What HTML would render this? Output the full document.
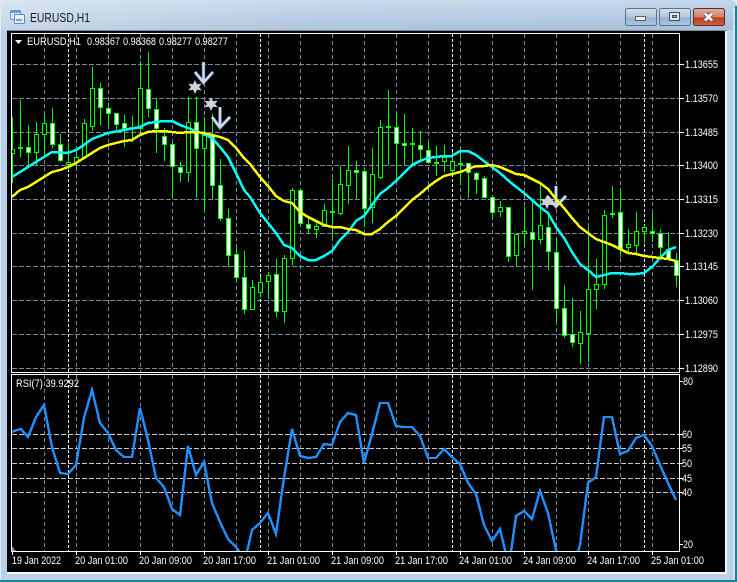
<!DOCTYPE html>
<html><head><meta charset="utf-8"><title>EURUSD,H1</title>
<style>html,body{margin:0;padding:0;width:737px;height:582px;overflow:hidden;background:#b9d1ea}svg{display:block}text{font-family:"Liberation Sans",sans-serif;fill:#fff;font-size:11px}</style></head>
<body>
<svg width="737" height="582" viewBox="0 0 737 582" xmlns="http://www.w3.org/2000/svg">
<defs>
<linearGradient id="t" x1="0" y1="0" x2="0" y2="1"><stop offset="0" stop-color="#c4d8ec"/><stop offset=".06" stop-color="#c2d6ea"/><stop offset="1" stop-color="#a6bfd9"/></linearGradient>
<linearGradient id="h" x1="0" y1="0" x2="1" y2="0"><stop offset="0" stop-color="#fff" stop-opacity=".35"/><stop offset=".4" stop-color="#fff" stop-opacity=".1"/><stop offset="1" stop-color="#fff" stop-opacity="0"/></linearGradient>
<linearGradient id="b" x1="0" y1="0" x2="0" y2="1"><stop offset="0" stop-color="#d3deeb"/><stop offset=".5" stop-color="#b3c8de"/><stop offset=".55" stop-color="#97b4d2"/><stop offset="1" stop-color="#a7c4e0"/></linearGradient>
<linearGradient id="c" x1="0" y1="0" x2="0" y2="1"><stop offset="0" stop-color="#e3b0a6"/><stop offset=".5" stop-color="#d3806e"/><stop offset=".55" stop-color="#bd3d22"/><stop offset="1" stop-color="#cf5f40"/></linearGradient>
<clipPath id="m"><rect x="12" y="34" width="667" height="338"/></clipPath>
<clipPath id="r"><rect x="12" y="375" width="667" height="176"/></clipPath>
</defs>
<rect width="737" height="582" fill="#b9d1ea"/>
<rect width="737" height="30" fill="url(#t)"/>
<rect width="737" height="30" fill="url(#h)"/>
<path d="M0 0H6Q0 1 0 8Z" fill="#e8e8e8"/>
<path d="M731 0H737V8Q737 1 731 0Z" fill="#e8e8e8"/>
<rect x="0" y="8" width="1" height="574" fill="#e4edf6"/>
<rect x="733" y="8" width="2" height="572" fill="#d2e2f1"/>
<rect x="735" y="6" width="2" height="576" fill="#1f8295"/>
<rect x="0" y="580" width="737" height="2" fill="#1f8295"/>
<rect x="7" y="30" width="720" height="1.5" fill="#7f8c9c"/>
<rect x="7" y="31" width="719" height="541" fill="#000"/>
<rect x="7" y="572" width="720" height="2" fill="#f4f8fc"/>
<rect x="725" y="31" width="2" height="543" fill="#f4f8fc"/>

<!-- title icon -->
<rect x="10.500" y="10.500" width="10" height="9" rx="1" fill="#dfeaf6" stroke="#6e93c8"/>
<rect x="14.500" y="14.500" width="10" height="9" rx="1" fill="#eef4fb" stroke="#5b86c4"/>
<path d="M16 19l1.500 2 1.500-2 1.500 2 1.500-2" fill="none" stroke="#4a78bd"/>
<rect x="11" y="11" width="9" height="2" fill="#6f9bd6"/>
<text x="30" y="22" style="font-size:12.500px;fill:#141c28" textLength="60" lengthAdjust="spacingAndGlyphs">EURUSD,H1</text>

<!-- window buttons -->
<rect x="625.500" y="8.500" width="31" height="17" rx="2" fill="url(#b)" stroke="#5e718a"/>
<rect x="635.500" y="16.500" width="10" height="4" fill="#eceff3" stroke="#56606e"/>
<rect x="659.500" y="8.500" width="31" height="17" rx="2" fill="url(#b)" stroke="#5e718a"/>
<rect x="669.500" y="12.500" width="10" height="8" fill="#dfe5ec" stroke="#444e5c"/>
<rect x="672.500" y="15.500" width="4" height="2" fill="#8ea6c0" stroke="#444e5c"/>
<rect x="693.500" y="8.500" width="31" height="17" rx="2" fill="url(#c)" stroke="#5c2a2c"/>
<path d="M705 13.500L712 20.500M712 13.500L705 20.500" stroke="#5d3a3a" stroke-width="4.500" fill="none"/>
<path d="M705 13.500L712 20.500M712 13.500L705 20.500" stroke="#f5f5f5" stroke-width="3" fill="none"/>

<!-- main grid -->
<g clip-path="url(#m)" shape-rendering="crispEdges">
<path d="M12 64.500H680M12 98.500H680M12 132.500H680M12 165.500H680M12 199.500H680M12 233.500H680M12 266.500H680M12 300.500H680M12 334.500H680M12 368.500H680" stroke="#778899" stroke-dasharray="5 2" fill="none"/>
<path d="M44.500 34V372M76.500 34V372M108.500 34V372M140.500 34V372M172.500 34V372M204.500 34V372M236.500 34V372M268.500 34V372M300.500 34V372M332.500 34V372M364.500 34V372M396.500 34V372M428.500 34V372M460.500 34V372M492.500 34V372M524.500 34V372M556.500 34V372M588.500 34V372M620.500 34V372M652.500 34V372" stroke="#778899" stroke-dasharray="4 3" fill="none"/>
<path d="M68.500 34V372M260.500 34V372M452.500 34V372M644.500 34V372" stroke="#fff" stroke-dasharray="3 2" fill="none"/>
<!-- wicks -->
<path stroke="#00ff00" fill="none" d="M12.500 117V183M20.500 100V157M28.500 125V167M36.500 122V165M44.500 114V157M52.500 108V148M60.500 134V162M68.500 143V170M76.500 150V168M84.500 119V157M92.500 67V131M100.500 83V125M108.500 103V126M116.500 113V132M124.500 115V147M132.500 116V142M140.500 61V133M148.500 52V117M156.500 99V153M164.500 128V161M172.500 142V197M180.500 162V182M188.500 97V182M196.500 97V198M204.500 117V212M212.500 114V199M220.500 159V221M228.500 209V267M236.500 247V282M244.500 251V314M252.500 280V309M260.500 277V297M268.500 272V299M276.500 259V317M284.500 255V323M292.500 188V265M300.500 188V227M308.500 218V233M316.500 222V238M324.500 204V227M332.500 179V238M340.500 166V215M348.500 146V204M356.500 161V199M364.500 168V227M372.500 148V223M380.500 120V179M388.500 90V165M396.500 113V180M404.500 114V166M412.500 128V167M420.500 131V162M428.500 141V163M436.500 146V176M444.500 145V172M452.500 152V175M460.500 147V185M468.500 163V198M476.500 172V194M484.500 176V198M492.500 197V217M500.500 201V217M508.500 207V262M516.500 233V267M524.500 207V247M532.500 201V290M540.500 183V244M548.500 213V270M556.500 238V323M564.500 285V338M572.500 298V347M580.500 311V364M588.500 227V362M596.500 259V309M604.500 210V289M612.500 186V218M620.500 189V257M628.500 229V253M636.500 212V255M644.500 225V243M652.500 213V242M660.500 229V257M668.500 232V259M676.500 253V287"/>
<!-- dojis -->
<path stroke="#00ff00" stroke-width="2" fill="none" d="M18 148h5M130 128h5M330 212h5M386 127h5M410 144h5M434 163h5M458 164h5M610 214h5"/>
<!-- bull (hollow) bodies -->
<path stroke="#00ff00" fill="#000" d="M10.500 149.500h4v4h-4zM34.500 134.500h4v18h-4zM42.500 123.500h4v11h-4zM66.500 162.500h4v2h-4zM74.500 157.500h4v5h-4zM82.500 123.500h4v34h-4zM90.500 88.500h4v38h-4zM138.500 88.500h4v40h-4zM186.500 122.500h4v50h-4zM202.500 135.500h4v13h-4zM250.500 287.500h4v22h-4zM258.500 282.500h4v10h-4zM266.500 275.500h4v6h-4zM282.500 258.500h4v53h-4zM290.500 190.500h4v68h-4zM314.500 226.500h4v3h-4zM322.500 210.500h4v16h-4zM338.500 184.500h4v29h-4zM346.500 170.500h4v15h-4zM370.500 174.500h4v33h-4zM378.500 127.500h4v50h-4zM442.500 157.500h4v4h-4zM450.500 161.500h4v9h-4zM498.500 207.500h4v4h-4zM514.500 234.500h4v21h-4zM522.500 231.500h4v2h-4zM538.500 225.500h4v14h-4zM578.500 332.500h4v11h-4zM586.500 289.500h4v44h-4zM594.500 284.500h4v5h-4zM602.500 215.500h4v69h-4zM626.500 244.500h4v3h-4zM634.500 231.500h4v14h-4zM642.500 227.500h4v4h-4z"/>
<!-- bear (white) bodies -->
<path stroke="#00ff00" fill="#fff" d="M26.500 147.500h4v5h-4zM50.500 123.500h4v21h-4zM58.500 144.500h4v16h-4zM98.500 88.500h4v19h-4zM106.500 108.500h4v5h-4zM114.500 113.500h4v11h-4zM122.500 123.500h4v5h-4zM146.500 89.500h4v19h-4zM154.500 109.500h4v19h-4zM162.500 136.500h4v8h-4zM170.500 144.500h4v22h-4zM178.500 167.500h4v5h-4zM194.500 122.500h4v26h-4zM210.500 134.500h4v51h-4zM218.500 185.500h4v33h-4zM226.500 218.500h4v37h-4zM234.500 254.500h4v23h-4zM242.500 277.500h4v32h-4zM274.500 274.500h4v37h-4zM298.500 190.500h4v33h-4zM306.500 224.500h4v4h-4zM354.500 170.500h4v2h-4zM362.500 171.500h4v37h-4zM394.500 127.500h4v16h-4zM402.500 143.500h4v2h-4zM418.500 145.500h4v4h-4zM426.500 150.500h4v12h-4zM466.500 163.500h4v9h-4zM474.500 173.500h4v6h-4zM482.500 178.500h4v19h-4zM490.500 197.500h4v15h-4zM506.500 207.500h4v49h-4zM530.500 232.500h4v7h-4zM546.500 227.500h4v24h-4zM554.500 252.500h4v56h-4zM562.500 308.500h4v27h-4zM570.500 334.500h4v8h-4zM618.500 212.500h4v36h-4zM650.500 231.500h4v2h-4zM658.500 233.500h4v14h-4zM666.500 249.500h4v10h-4zM674.500 260.500h4v15h-4z"/>
</g>

<!-- arrows and stars -->
<g fill="none" stroke-linejoin="miter">
<path d="M203.500 62V82M195 72L203.500 82.500L213 72" stroke="#3a6fb5" stroke-width="3.500"/>
<path d="M203.500 62V82M195 72L203.500 82.500L213 72" stroke="#d6d8de" stroke-width="2.400"/>
<path d="M220 107V127M212 117L220 127.500L230 117" stroke="#3a6fb5" stroke-width="3.500"/>
<path d="M220 107V127M212 117L220 127.500L230 117" stroke="#d6d8de" stroke-width="2.400"/>
<path d="M556 186V206M547 196L556 206.500L566 196" stroke="#3a6fb5" stroke-width="3.500"/>
<path d="M556 186V206M547 196L556 206.500L566 196" stroke="#d6d8de" stroke-width="2.400"/>
</g>
<g fill="#d0d3d9">
<path d="M195 80l2 4.200 4.800-.6-2.800 3.400 2.800 3.400-4.800-.6-2 4.200-2-4.200-4.800.6 2.800-3.400-2.800-3.400 4.800.6z"/>
<path d="M211 97l2 4.200 4.800-.6-2.800 3.400 2.800 3.400-4.800-.6-2 4.200-2-4.200-4.800.6 2.800-3.400-2.800-3.400 4.800.6z"/>
<path d="M547 195l2 4.200 4.800-.6-2.800 3.400 2.800 3.400-4.800-.6-2 4.200-2-4.200-4.800.6 2.800-3.400-2.800-3.400 4.800.6z"/>
</g>

<!-- moving averages -->
<g clip-path="url(#m)" fill="none" stroke-width="2.500" shape-rendering="crispEdges">
<polyline stroke="#00ffff" points="12,177 28,167 44,157 52,152 68,153 76,150 84,145 92,139 100,136 108,133 124,130 140,127 148,123 156,122 164,121 172,121 180,125 188,128 204,134 212,138 220,147 228,157 236,173 244,190 250,197 260,213 268,223 276,233 284,245 292,248 300,256 308,260 316,260 324,256 332,251 340,240 348,232 356,221 364,216 372,205 380,194 388,188 396,181 404,173 412,165 420,161 428,158 436,157 444,156 452,156 460,151 468,151 476,155 484,161 492,167 500,173 510,182 524,193 532,200 540,207 548,213 556,227 564,238 572,252 580,264 588,270 596,277 604,275 612,273 620,273 628,274 636,274 644,273 652,267 660,258 668,250 676,247"/>
<polyline stroke="#ffff00" points="12,197 20,190 28,187 36,182 44,177 52,172 60,170 68,167 76,163 84,158 92,153 100,148 108,145 116,143 124,141 132,140 140,135 148,132 156,131 164,131 172,132 180,133 188,132 196,132 204,133 212,135 220,137 228,140 236,148 244,158 250,164 260,177 268,186 276,196 284,201 292,203 300,212 308,217 316,221 324,225 332,227 340,227 348,229 356,230 364,234 372,234 380,229 388,222 396,216 404,208 412,200 420,194 428,187 436,181 444,176 452,174 460,172 468,169 476,166 484,166 492,165 500,167 507,170 516,174 524,175 532,179 540,183 548,189 556,199 564,208 572,218 580,227 588,233 596,239 604,242 612,245 620,249 628,253 636,254 644,256 652,257 660,258 668,259 676,261"/>
</g>

<!-- RSI grid -->
<g clip-path="url(#r)" shape-rendering="crispEdges" fill="none">
<path d="M44.500 375V551M76.500 375V551M108.500 375V551M140.500 375V551M172.500 375V551M204.500 375V551M236.500 375V551M268.500 375V551M300.500 375V551M332.500 375V551M364.500 375V551M396.500 375V551M428.500 375V551M460.500 375V551M492.500 375V551M524.500 375V551M556.500 375V551M588.500 375V551M620.500 375V551M652.500 375V551" stroke="#778899" stroke-dasharray="4 3"/>
<path d="M68.500 375V551M260.500 375V551M452.500 375V551M644.500 375V551" stroke="#fff" stroke-dasharray="3 2"/>
<path d="M12 434.500H680M12 448.500H680M12 463.500H680M12 478.500H680M12 492.500H680" stroke="#c8c8c8" stroke-dasharray="5 2"/>
</g>
<path d="M12 546L16 551H12Z" fill="#808890"/>
<g clip-path="url(#r)">
<polyline fill="none" stroke="#1e90ff" stroke-width="2.400" shape-rendering="crispEdges" points="12,432 17,430 21,429 28,437 36,417 44,405 52,447 60,473 68,474 76,465 84,418 92,390 100,423 108,433 116,450 124,457 132,457 140,408 148,440 156,478 164,487 172,509 180,515 188,446 196,475 204,462 212,503 220,522 228,539 236,547 244,558 247,552 252,530 260,523 268,513 276,534 284,478 292,429 300,456 308,458 316,457 324,444 332,445 340,422 348,413 356,415 364,463 372,434 380,403 388,403 396,426 404,427 412,427 420,436 428,458 436,458 444,449 452,457 460,464 468,483 476,494 484,525 492,541 500,529 505,550 508,560 511,552 516,516 524,511 532,519 540,491 548,513 556,550 564,560 572,560 578,552 580,545 588,483 596,477 604,417 612,417 620,454 628,451 636,438 644,435 652,446 660,465 668,483 676,500"/>
</g>

<!-- frames -->
<g fill="none" stroke="#fff" shape-rendering="crispEdges">
<path d="M11.500 372.500V33.500H679.500V372.500"/>
<path d="M11 372.500H680"/>
<path d="M11.500 551.500V374.500H679.500V551.500H11.500"/>
<path d="M680 64.500h4M680 98.500h4M680 132.500h4M680 165.500h4M680 199.500h4M680 233.500h4M680 266.500h4M680 300.500h4M680 334.500h4M680 368.500h4"/>
<path d="M12.500 551v4M76.500 551v4M140.500 551v4M204.500 551v4M268.500 551v4M332.500 551v4M396.500 551v4M460.500 551v4M524.500 551v4M588.500 551v4M652.500 551v4"/>
<path d="M680 381.500h3M680 434.500h3M680 448.500h3M680 463.500h3M680 478.500h3M680 492.500h3M680 544.500h3"/>
</g>

<!-- header -->
<path d="M15 40H22L18.500 44Z" fill="#fff"/>
<text x="27" y="45" textLength="54" lengthAdjust="spacingAndGlyphs">EURUSD,H1</text>
<text x="87" y="45" textLength="33" lengthAdjust="spacingAndGlyphs">0.98367</text>
<text x="123" y="45" textLength="33" lengthAdjust="spacingAndGlyphs">0.98368</text>
<text x="159" y="45" textLength="33" lengthAdjust="spacingAndGlyphs">0.98277</text>
<text x="195" y="45" textLength="33" lengthAdjust="spacingAndGlyphs">0.98277</text>
<text x="16" y="387" textLength="63" lengthAdjust="spacingAndGlyphs">RSI(7) 39.9292</text>

<!-- price axis -->
<text x="685" y="68" textLength="33" lengthAdjust="spacingAndGlyphs">1.13655</text>
<text x="685" y="102" textLength="33" lengthAdjust="spacingAndGlyphs">1.13570</text>
<text x="685" y="136" textLength="33" lengthAdjust="spacingAndGlyphs">1.13485</text>
<text x="685" y="169" textLength="33" lengthAdjust="spacingAndGlyphs">1.13400</text>
<text x="685" y="203" textLength="33" lengthAdjust="spacingAndGlyphs">1.13315</text>
<text x="685" y="237" textLength="33" lengthAdjust="spacingAndGlyphs">1.13230</text>
<text x="685" y="270" textLength="33" lengthAdjust="spacingAndGlyphs">1.13145</text>
<text x="685" y="304" textLength="33" lengthAdjust="spacingAndGlyphs">1.13060</text>
<text x="685" y="338" textLength="33" lengthAdjust="spacingAndGlyphs">1.12975</text>
<text x="685" y="372" textLength="33" lengthAdjust="spacingAndGlyphs">1.12890</text>

<!-- rsi axis -->
<text x="683" y="385" textLength="10" lengthAdjust="spacingAndGlyphs">80</text>
<text x="682" y="438" textLength="10" lengthAdjust="spacingAndGlyphs">60</text>
<text x="682" y="452" textLength="10" lengthAdjust="spacingAndGlyphs">55</text>
<text x="682" y="467" textLength="10" lengthAdjust="spacingAndGlyphs">50</text>
<text x="682" y="482" textLength="10" lengthAdjust="spacingAndGlyphs">45</text>
<text x="682" y="496" textLength="10" lengthAdjust="spacingAndGlyphs">40</text>
<text x="683" y="548" textLength="10" lengthAdjust="spacingAndGlyphs">20</text>

<!-- time axis -->
<text x="12" y="564" textLength="49" lengthAdjust="spacingAndGlyphs">19 Jan 2022</text>
<text x="75" y="564" textLength="53" lengthAdjust="spacingAndGlyphs">20 Jan 01:00</text>
<text x="139" y="564" textLength="53" lengthAdjust="spacingAndGlyphs">20 Jan 09:00</text>
<text x="203" y="564" textLength="53" lengthAdjust="spacingAndGlyphs">20 Jan 17:00</text>
<text x="267" y="564" textLength="53" lengthAdjust="spacingAndGlyphs">21 Jan 01:00</text>
<text x="331" y="564" textLength="53" lengthAdjust="spacingAndGlyphs">21 Jan 09:00</text>
<text x="395" y="564" textLength="53" lengthAdjust="spacingAndGlyphs">21 Jan 17:00</text>
<text x="459" y="564" textLength="53" lengthAdjust="spacingAndGlyphs">24 Jan 01:00</text>
<text x="523" y="564" textLength="53" lengthAdjust="spacingAndGlyphs">24 Jan 09:00</text>
<text x="587" y="564" textLength="53" lengthAdjust="spacingAndGlyphs">24 Jan 17:00</text>
<text x="651" y="564" textLength="53" lengthAdjust="spacingAndGlyphs">25 Jan 01:00</text>
</svg>
</body></html>
